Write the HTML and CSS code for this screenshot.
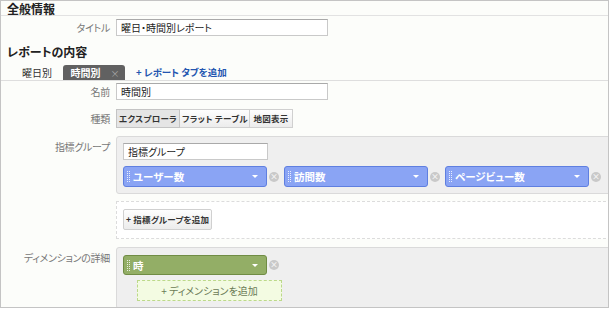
FILE: index.html
```html
<!DOCTYPE html>
<html lang="ja">
<head>
    <meta charset="utf-8">
    <title>レポートの編集</title>
    <link rel="stylesheet" href="styles.css">
</head>
<body>
<div class="page">
    <h2 class="section-title first">全般情報</h2>
    <div class="row row-title">
        <label class="label">タイトル</label>
        <input class="text" type="text" value="曜日・時間別レポート">
    </div>

    <h2 class="section-title">レポートの内容</h2>
    <div class="tabs">
        <span class="tab">曜日別</span>
        <span class="tab active">時間別<span class="tab-close">×</span></span>
        <a class="add-tab" href="#">+ レポート タブを追加</a>
    </div>

    <div class="row row-name">
        <label class="label">名前</label>
        <input class="text" type="text" value="時間別">
    </div>

    <div class="row row-type">
        <label class="label">種類</label>
        <div class="btn-group">
            <span class="btn pressed explorer">エクスプローラ</span>
            <span class="btn flat">フラット テーブル</span>
            <span class="btn map">地図表示</span>
        </div>
    </div>

    <div class="row row-metrics">
        <label class="label">指標グループ</label>
        <div class="content">
            <div class="panel metric-panel">
                <input class="text group-name" type="text" value="指標グループ">
                <div class="chips">
                    <div class="chip-wrap">
                        <span class="chip blue"><span class="grip"></span>ユーザー数<span class="caret"></span></span>
                        <span class="remove">×</span>
                    </div>
                    <div class="chip-wrap">
                        <span class="chip blue"><span class="grip"></span>訪問数<span class="caret"></span></span>
                        <span class="remove">×</span>
                    </div>
                    <div class="chip-wrap">
                        <span class="chip blue"><span class="grip"></span>ページビュー数<span class="caret"></span></span>
                        <span class="remove">×</span>
                    </div>
                    <span class="drop-edge"></span>
                </div>
            </div>
            <div class="add-group">
                <span class="btn small">+ 指標グループを追加</span>
            </div>
        </div>
    </div>

    <div class="row row-dims">
        <label class="label">ディメンションの詳細</label>
        <div class="content">
            <div class="panel dim-panel">
                <div class="chip-wrap">
                    <span class="chip green"><span class="grip"></span>時<span class="caret"></span></span>
                    <span class="remove">×</span>
                </div>
                <div class="add-dim">+ ディメンションを追加</div>
            </div>
        </div>
    </div>
</div>
</body>
</html>
```

FILE: styles.css
```css
body {
    margin: 0;
    font-family: "Noto Sans CJK JP", "Noto Sans", sans-serif;
    font-size: 11px;
    color: #333;
    font-feature-settings: "palt";
}

.page {
    width: 607px;
    height: 306px;
    border: 1px solid #c4c4c4;
    background: #fcfdfa;
    overflow: hidden;
}

.section-title {
    margin: 0;
    padding: 0 6px;
    font-size: 12px;
    font-weight: bold;
    line-height: 16px;
    color: #222;
}
.section-title.first {
    margin-top: 1px;
    border-bottom: 1px solid #e2e2e2;
    line-height: 13px;
}

.row {
    display: flex;
    align-items: flex-start;
    gap: 6px;
}
.label {
    width: 109px;
    flex: none;
    text-align: right;
    color: #777;
    font-size: 10px;
    letter-spacing: -0.3px;
    white-space: nowrap;
}

.text {
    box-sizing: border-box;
    width: 212px;
    height: 17px;
    margin: 0;
    padding: 0 4px;
    border: 1px solid #c9c9c9;
    border-top-color: #a9a9a9;
    background: #fff;
    font-family: inherit;
    font-feature-settings: "palt";
    font-size: 10px;
    color: #222;
    outline: none;
}

.row-title {
    margin-top: 3px;
    align-items: center;
    line-height: 17px;
}
.row-title + .section-title {
    margin-top: 8px;
}

.tabs {
    display: flex;
    align-items: flex-end;
    height: 15px;
    margin-top: 5px;
    padding-left: 10px;
    border-bottom: 1px solid #dedede;
}
.tab {
    width: 52px;
    height: 15px;
    line-height: 15px;
    text-align: center;
    color: #333;
    font-size: 10px;
}
.tab.active {
    width: 62px;
    background: #616161;
    color: #fff;
    font-weight: bold;
    border-radius: 3px 3px 0 0;
    box-sizing: border-box;
    padding-left: 2px;
}
.tab-close {
    margin-left: 10px;
    font-weight: normal;
    color: #aaa;
    font-size: 9px;
}
.add-tab {
    margin-left: 11px;
    line-height: 15px;
    color: #2456b0;
    font-weight: bold;
    font-size: 9.5px;
    text-decoration: none;
}

.row-name {
    margin-top: 2px;
    align-items: center;
}

.row-type {
    margin-top: 9px;
    align-items: center;
}
.btn-group {
    display: flex;
}
.btn {
    display: inline-block;
    box-sizing: border-box;
    height: 19px;
    line-height: 17px;
    padding: 0 2px;
    border: 1px solid #d0d0d0;
    background: linear-gradient(#fefefe, #ececec);
    font-size: 8.5px;
    font-weight: bold;
    color: #333;
    text-align: center;
    white-space: nowrap;
    letter-spacing: 0.3px;
}
.btn.explorer {
    width: 64px;
}
.btn.flat {
    width: 70px;
}
.btn.map {
    width: 43px;
}
.btn-group .btn + .btn {
    border-left: none;
}
.btn.pressed {
    background: #e5e5e5;
    border-color: #c4c4c4;
}

.row-metrics {
    margin-top: 8px;
}
.row-metrics .label {
    padding-top: 3px;
}
.content {
    flex: 1;
    min-width: 0;
}

.panel {
    box-sizing: border-box;
    width: 500px;
    background: #efefef;
    border: 1px solid #dadada;
    border-radius: 3px;
    padding: 6px;
}
.metric-panel {
    height: 58px;
}
.group-name {
    display: block;
    width: 145px;
    height: 17px;
}

.chips {
    display: flex;
    align-items: center;
    gap: 5px;
    margin-top: 6px;
    white-space: nowrap;
}
.chip-wrap {
    display: flex;
    align-items: center;
    gap: 2px;
}
.chip {
    position: relative;
    display: flex;
    align-items: center;
    box-sizing: border-box;
    width: 144px;
    height: 21px;
    padding-left: 3px;
    border-radius: 3px;
    color: #fff;
    font-weight: bold;
    font-size: 10.5px;
}
.chip.blue {
    background: #8aa4f4;
    border: 1px solid #5f7fe0;
}
.chip.green {
    height: 20px;
    background: #93ae66;
    border: 1px solid #708c44;
}
.grip {
    width: 4px;
    height: 11px;
    margin-right: 2px;
    background: repeating-linear-gradient(to right, rgba(255, 255, 255, 0.8) 0 1px, transparent 1px 2px);
    -webkit-mask-image: repeating-linear-gradient(to bottom, #000 0 1px, transparent 1px 2px);
    mask-image: repeating-linear-gradient(to bottom, #000 0 1px, transparent 1px 2px);
}
.caret {
    position: absolute;
    right: 8px;
    top: 8px;
    border-left: 3px solid transparent;
    border-right: 3px solid transparent;
    border-top: 3px solid #fff;
}
.remove {
    width: 10px;
    height: 10px;
    border-radius: 50%;
    background: #c9c9c9;
    color: #f4f4f4;
    font-size: 8px;
    line-height: 10px;
    text-align: center;
    font-weight: bold;
}
.drop-edge {
    width: 0;
    height: 20px;
    border-left: 1px dotted #7a92e8;
    margin-left: 2px;
}

.add-group {
    box-sizing: border-box;
    width: 500px;
    height: 38px;
    margin-top: 7px;
    padding: 7px 6px;
    border: 1px dashed #dcdcdc;
    background: #fff;
}
.btn.small {
    width: 89px;
    height: 21px;
    line-height: 19px;
    padding: 0 2px;
    border-radius: 2px;
    font-size: 8.5px;
    letter-spacing: 0.2px;
}

.row-dims {
    margin-top: 8px;
}
.row-dims .label {
    padding-top: 3px;
}
.dim-panel {
    height: 62px;
    padding-top: 7px;
}
.add-dim {
    box-sizing: border-box;
    width: 145px;
    height: 21px;
    margin: 5px 0 0 14px;
    border: 1px dashed #bcd98a;
    background: #f3fbe2;
    text-align: center;
    line-height: 19px;
    color: #6a7a55;
    font-size: 10px;
}
```
